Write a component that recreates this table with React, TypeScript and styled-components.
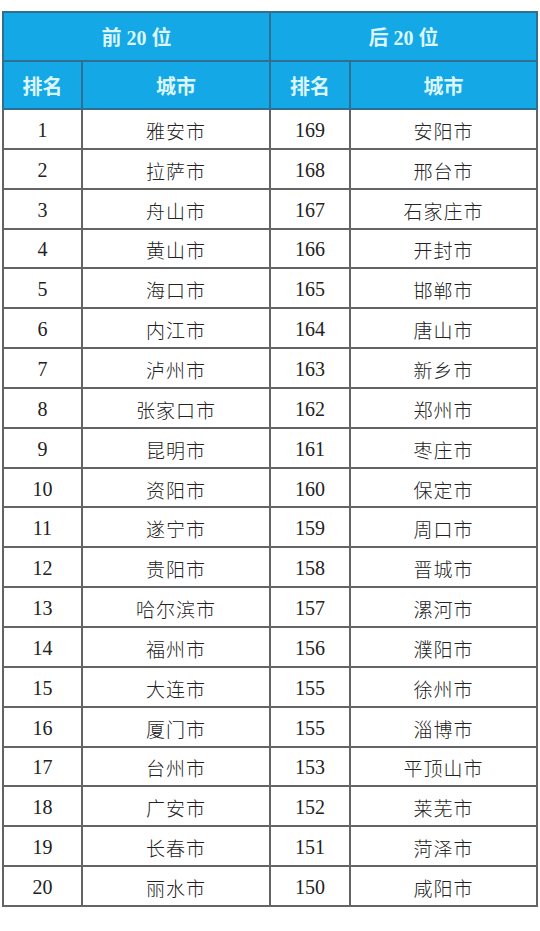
import { FC } from "react";
import styled, { createGlobalStyle } from "styled-components";

const GlobalStyle = createGlobalStyle`
  html, body {
    margin: 0;
    padding: 0;
    background: #ffffff;
  }
`;

const Page = styled.div`
  padding: 11px 4px 0 2px;
  font-family: "Liberation Serif", "Noto Sans CJK SC", serif;
`;

const Table = styled.table`
  width: 534px;
  border-collapse: collapse;
  table-layout: fixed;
  border: 2px solid #5f6366;
`;

const HeadCell = styled.th<{ $tall?: boolean }>`
  height: ${({ $tall }) => ($tall ? 47 : 46)}px;
  padding: 0;
  background: #14a8e6;
  color: #dcf6ff;
  font-size: 20px;
  font-weight: 700;
  text-align: center;
  border: 2px solid #2f6f92;
  font-family: "Liberation Serif", "Noto Sans CJK SC", sans-serif;
`;

const Cell = styled.td<{ $city?: boolean }>`
  height: 39.85px;
  padding: 3px 0 0;
  box-sizing: border-box;
  color: #222222;
  font-size: ${({ $city }) => ($city ? 19 : 20)}px;
  font-weight: ${({ $city }) => ($city ? 300 : 400)};
  text-align: center;
  border: 2px solid #626466;
  letter-spacing: ${({ $city }) => ($city ? "1px" : "0")};
`;

const top = [
  "雅安市", "拉萨市", "舟山市", "黄山市", "海口市", "内江市", "泸州市", "张家口市",
  "昆明市", "资阳市", "遂宁市", "贵阳市", "哈尔滨市", "福州市", "大连市", "厦门市",
  "台州市", "广安市", "长春市", "丽水市",
];

const bottom: [number, string][] = [
  [169, "安阳市"], [168, "邢台市"], [167, "石家庄市"], [166, "开封市"], [165, "邯郸市"],
  [164, "唐山市"], [163, "新乡市"], [162, "郑州市"], [161, "枣庄市"], [160, "保定市"],
  [159, "周口市"], [158, "晋城市"], [157, "漯河市"], [156, "濮阳市"], [155, "徐州市"],
  [155, "淄博市"], [153, "平顶山市"], [152, "莱芜市"], [151, "菏泽市"], [150, "咸阳市"],
];

const App: FC = () => (
  <>
    <GlobalStyle />
    <Page>
      <Table>
        <colgroup>
          <col style={{ width: 79 }} />
          <col style={{ width: 188 }} />
          <col style={{ width: 80 }} />
          <col style={{ width: 187 }} />
        </colgroup>
        <thead>
          <tr>
            <HeadCell $tall colSpan={2}>前 20 位</HeadCell>
            <HeadCell $tall colSpan={2}>后 20 位</HeadCell>
          </tr>
          <tr>
            <HeadCell>排名</HeadCell>
            <HeadCell>城市</HeadCell>
            <HeadCell>排名</HeadCell>
            <HeadCell>城市</HeadCell>
          </tr>
        </thead>
        <tbody>
          {top.map((city, i) => (
            <tr key={i}>
              <Cell>{i + 1}</Cell>
              <Cell $city>{city}</Cell>
              <Cell>{bottom[i][0]}</Cell>
              <Cell $city>{bottom[i][1]}</Cell>
            </tr>
          ))}
        </tbody>
      </Table>
    </Page>
  </>
);

export default App;
